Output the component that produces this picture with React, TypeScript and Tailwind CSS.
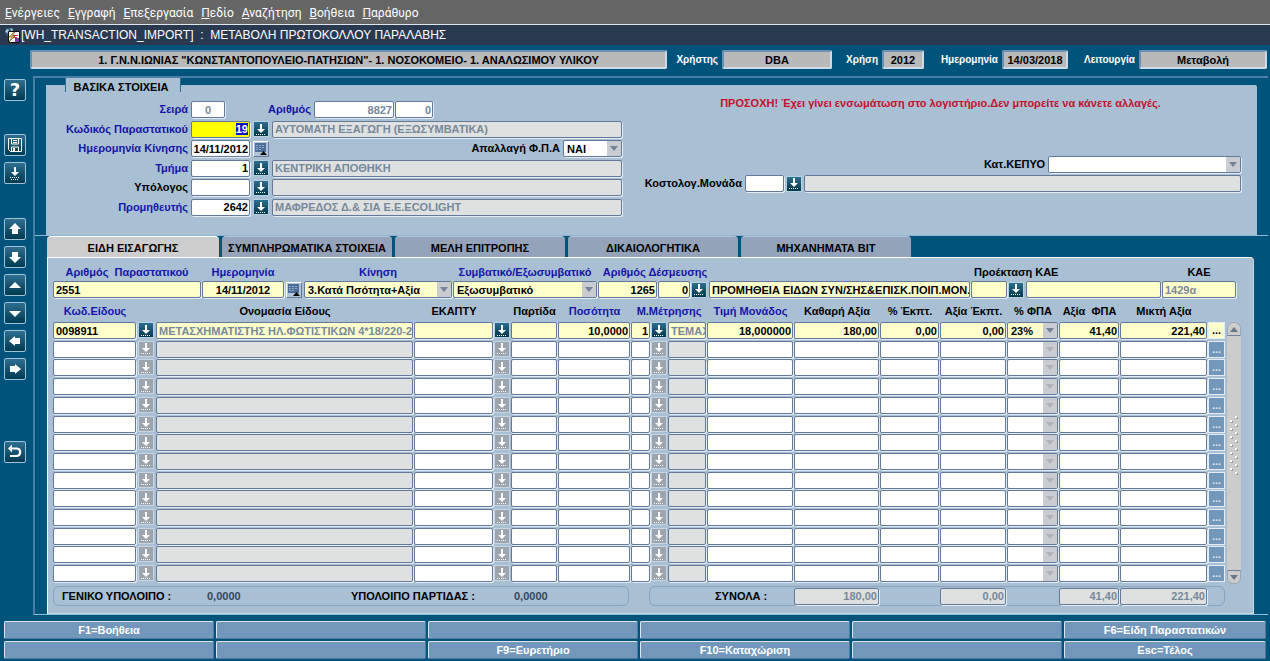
import { useEffect, useRef, type ReactNode } from 'react'
import { clsx } from 'clsx'

const menus = ['Ενέργειες', 'Εγγραφή', 'Επεξεργασία', 'Πεδίο', 'Αναζήτηση', 'Βοήθεια', 'Παράθυρο']

const tabs = ['ΕΙΔΗ ΕΙΣΑΓΩΓΗΣ', 'ΣΥΜΠΛΗΡΩΜΑΤΙΚΑ ΣΤΟΙΧΕΙΑ', 'ΜΕΛΗ ΕΠΙΤΡΟΠΗΣ', 'ΔΙΚΑΙΟΛΟΓΗΤΙΚΑ', 'ΜΗΧΑΝΗΜΑΤΑ ΒΙΤ']

const functionKeys = [
  'F1=Βοήθεια', '', '', '', '', 'F6=Είδη Παραστατικών',
  '', '', 'F9=Ευρετήριο', 'F10=Καταχώριση', '', 'Esc=Τέλος'
]

const emptyRows = Array.from({ length: 13 }, (_, i) => i + 2)

type Tone = 'white' | 'yellow' | 'gray' | 'active'

interface FieldProps {
  label?: string
  id?: string
  value?: string
  tone?: Tone
  muted?: boolean
  align?: 'left' | 'center' | 'right'
  className?: string
}

const tones: Record<Tone, string> = {
  white: 'bg-white',
  yellow: 'bg-[#ffffcc]',
  gray: 'bg-[#dee1e0]',
  active: 'bg-[#ffff00]'
}

const aligns = { left: 'pl-0.5 text-left', center: 'text-center', right: 'pr-px text-right' }

const fieldBox =
  'block h-[17px] min-w-0 rounded-xs border border-[#64789a] text-[11px] font-bold outline-none shadow-[1px_1px_0_#e4edf5]'

function Field({ label, id, value = '', tone = 'white', muted, align = 'left', className = 'w-full' }: FieldProps) {
  return (
    <input
      id={id}
      aria-label={label}
      defaultValue={value}
      readOnly={tone === 'gray'}
      className={clsx(fieldBox, tones[tone], aligns[align], muted ? 'text-[#76889b]' : 'text-black', className)}
    />
  )
}

interface ChoiceProps {
  label?: string
  id?: string
  value?: string
  tone?: Tone
  disabled?: boolean
  className?: string
}

function Choice({ label, id, value = '', tone = 'white', disabled, className = 'w-full' }: ChoiceProps) {
  return (
    <div className={clsx('relative', className)}>
      <select
        id={id}
        aria-label={label}
        disabled={disabled}
        className={clsx(fieldBox, tones[tone], 'w-full appearance-none pt-0.5 pl-[3px] text-black opacity-100')}
      >
        <option>{value}</option>
      </select>
      <span className="pointer-events-none absolute inset-y-px right-px flex w-[14px] items-center justify-center bg-[#c9ccd1]">
        <svg width="8" height="5" viewBox="0 0 8 5">
          <path d="M0 0h8L4 5z" fill={disabled ? '#b0b3b8' : '#75829a'} />
        </svg>
      </span>
    </div>
  )
}

function ListButton({ label, disabled }: { label: string; disabled?: boolean }) {
  return (
    <button
      aria-label={label}
      disabled={disabled}
      className={clsx(
        'flex size-4 shrink-0 items-center justify-center border',
        disabled
          ? 'border-[#c8d5e2] bg-[#9ca5ad]'
          : 'border-[#b5d0de] bg-linear-to-b from-[#2d6f8f] to-[#00384c]'
      )}
    >
      <svg width="12" height="13" viewBox="0 0 12 13" fill="#fff">
        <path d="M5 1h2v5h3L6 10 2 6h3z" />
        <path d="M1 11h1v1H1zM3 11h1v1H3zM5 11h1v1H5zM7 11h1v1H7zM9 11h1v1H9z" />
      </svg>
    </button>
  )
}

function CalendarButton({ label }: { label: string }) {
  return (
    <button
      aria-label={label}
      className="flex size-4 shrink-0 items-center justify-center border border-t-white border-r-[#64789a] border-b-[#64789a] border-l-white bg-[#b4c5d6]"
    >
      <svg width="14" height="14" viewBox="0 0 14 14">
        <path d="M1 1h11v9H1z" fill="#4c6f99" />
        <path d="M2 3.500h9M2 5.500h9M2 7.500h5" stroke="#8fadc9" strokeDasharray="2 1" />
        <path d="M6 13l3.500-4 3.500 4z" fill="#000" />
      </svg>
    </button>
  )
}

function ToolButton({ label, children }: { label: string; children: ReactNode }) {
  return (
    <button
      aria-label={label}
      className="flex size-[22px] items-center justify-center rounded-xs border border-[#9cc3d8] bg-linear-to-b from-[#2e6f90] to-[#003a50]"
    >
      <svg width="18" height="18" viewBox="0 0 18 18" fill="#fff">
        {children}
      </svg>
    </button>
  )
}

function Toolbar() {
  return (
    <aside className="flex w-[33px] shrink-0 flex-col gap-1.5 pt-[3px] pl-1">
      <button
        aria-label="Βοήθεια"
        className="size-[22px] rounded-xs border border-[#9cc3d8] bg-linear-to-b from-[#2e6f90] to-[#003a50] text-center font-['DejaVu_Sans',sans-serif] text-[18px] leading-[20px] font-bold text-white"
      >
        ?
      </button>
      <div className="mt-[27px] flex flex-col gap-1.5">
        <ToolButton label="Αποθήκευση">
          <path d="M2.500 2.500h13v13H4.500l-2-2z" fill="none" stroke="#fff" />
          <path d="M5.500 3v5h7V3M5.500 15v-4h7v4" fill="none" stroke="#fff" />
          <path d="M7 4h4v1H7zM7 6h4v1H7zM7 12h2v3H7z" />
        </ToolButton>
        <ToolButton label="Λίστα τιμών">
          <path d="M8 3h2v5h3l-4 4-4-4h3z" />
          <path d="M4 13h1v1H4zM6 13h1v1H6zM8 13h1v1H8zM10 13h1v1h-1zM12 13h1v1h-1zM5 15h1v1H5zM7 15h1v1H7zM9 15h1v1H9zM11 15h1v1h-1z" />
        </ToolButton>
      </div>
      <div className="mt-7 flex flex-col gap-1.5">
        <ToolButton label="Προηγούμενη ομάδα"><path d="M9 3l6 6h-3v5H6V9H3z" /></ToolButton>
        <ToolButton label="Επόμενη ομάδα"><path d="M9 15l6-6h-3V4H6v5H3z" /></ToolButton>
        <ToolButton label="Προηγούμενη εγγραφή"><path d="M9 6l6 6H3z" /></ToolButton>
        <ToolButton label="Επόμενη εγγραφή"><path d="M9 13l6-6H3z" /></ToolButton>
        <ToolButton label="Προηγούμενο πεδίο"><path d="M3 9l6-5v2h5v6H9v2z" /></ToolButton>
        <ToolButton label="Επόμενο πεδίο"><path d="M15 9L9 4v2H4v6h5v2z" /></ToolButton>
      </div>
      <div className="mt-[55px]">
        <ToolButton label="Επιστροφή">
          <path d="M5 5.500h6a3.800 3.800 0 0 1 0 7.500H4" fill="none" stroke="#fff" strokeWidth="2.200" />
          <path d="M2 5.500l4-4v8z" />
        </ToolButton>
      </div>
    </aside>
  )
}

function InfoLabel({ children }: { children: ReactNode }) {
  return <span className="pr-1 text-right text-[10px] text-white">{children}</span>
}

function InfoBox({ children }: { children: ReactNode }) {
  return (
    <span className="flex h-[19px] items-center justify-center rounded-xs border-2 border-t-[#6f8fb0] border-r-[#cdd9e4] border-b-[#cdd9e4] border-l-[#6f8fb0] bg-[#b9b9b9] pt-px whitespace-nowrap">
      {children}
    </span>
  )
}

function InfoBar() {
  return (
    <header className="grid grid-cols-[1fr_55px_110px_50px_42px_78px_66px_71px_128px] items-center pt-[5px] pr-[3px] pl-[30px]">
      <InfoBox>1. Γ.Ν.Ν.ΙΩΝΙΑΣ "ΚΩΝΣΤΑΝΤΟΠΟΥΛΕΙΟ-ΠΑΤΗΣΙΩΝ"- 1. ΝΟΣΟΚΟΜΕΙΟ- 1. ΑΝΑΛΩΣΙΜΟΥ ΥΛΙΚΟΥ</InfoBox>
      <InfoLabel>Χρήστης</InfoLabel>
      <InfoBox>DBA</InfoBox>
      <InfoLabel>Χρήση</InfoLabel>
      <InfoBox>2012</InfoBox>
      <InfoLabel>Ημερομηνία</InfoLabel>
      <InfoBox>14/03/2018</InfoBox>
      <InfoLabel>Λειτουργία</InfoLabel>
      <InfoBox>Μεταβολή</InfoBox>
    </header>
  )
}

function FormLabel({ htmlFor, dark, children }: { htmlFor: string; dark?: boolean; children: ReactNode }) {
  return (
    <label
      htmlFor={htmlFor}
      className={clsx('w-[142px] shrink-0 text-right whitespace-nowrap', dark ? 'text-black' : 'text-[#1414a8]')}
    >
      {children}
    </label>
  )
}

function BasicDetails() {
  const codeRef = useRef<HTMLInputElement>(null)

  useEffect(() => {
    codeRef.current?.focus()
    codeRef.current?.select()
  }, [])

  return (
    <section className="mx-[11px] flow-root h-[150px] rounded-tr-xs bg-[#a9bfd3]">
      <h2 className="-mt-[7px] ml-[19px] flex h-[14px] w-[116px] items-center justify-center border-x border-[#2f6b8c] bg-[#a9bfd3] pt-1 pr-1">
        ΒΑΣΙΚΑ ΣΤΟΙΧΕΙΑ
      </h2>
      <div className="flex gap-[18px] pt-[9px] pr-4">
        <div className="flex h-[115px] w-[576px] shrink-0 flex-col justify-between">
          <div className="flex items-center gap-[3px]">
            <FormLabel htmlFor="series">Σειρά</FormLabel>
            <Field id="series" value="0" align="center" muted className="w-[34px]" />
            <label htmlFor="number" className="w-[83px] text-right text-[#1414a8]">Αριθμός</label>
            <div className="flex gap-px">
              <Field id="number" value="8827" align="right" muted className="w-[80px]" />
              <Field label="Αριθμός (συνέχεια)" value="0" align="right" muted className="w-[38px]" />
            </div>
          </div>
          <div className="flex items-center gap-[3px]">
            <FormLabel htmlFor="code">Κωδικός Παραστατικού</FormLabel>
            <input
              id="code"
              ref={codeRef}
              defaultValue="19"
              className={clsx(fieldBox, tones.active, 'w-[59px] pr-px text-right text-black selection:bg-[#0a12c8] selection:text-white')}
            />
            <ListButton label="Λίστα παραστατικών" />
            <Field label="Περιγραφή παραστατικού" value="ΑΥΤΟΜΑΤΗ ΕΞΑΓΩΓΗ (ΕΞΩΣΥΜΒΑΤΙΚΑ)" tone="gray" muted className="flex-1" />
          </div>
          <div className="flex items-center gap-[3px]">
            <FormLabel htmlFor="moved">Ημερομηνία Κίνησης</FormLabel>
            <Field id="moved" value="14/11/2012" align="right" className="w-[59px]" />
            <CalendarButton label="Ημερολόγιο κίνησης" />
            <label htmlFor="exempt" className="flex-1 text-right">Απαλλαγή Φ.Π.Α</label>
            <Choice id="exempt" value="ΝΑΙ" className="w-[59px]" />
          </div>
          <div className="flex items-center gap-[3px]">
            <FormLabel htmlFor="department">Τμήμα</FormLabel>
            <Field id="department" value="1" align="right" className="w-[59px]" />
            <ListButton label="Λίστα τμημάτων" />
            <Field label="Περιγραφή τμήματος" value="ΚΕΝΤΡΙΚΗ ΑΠΟΘΗΚΗ" tone="gray" muted className="flex-1" />
          </div>
          <div className="flex items-center gap-[3px]">
            <FormLabel htmlFor="officer" dark>Υπόλογος</FormLabel>
            <Field id="officer" className="w-[59px]" />
            <ListButton label="Λίστα υπολόγων" />
            <Field label="Όνομα υπολόγου" tone="gray" className="flex-1" />
          </div>
          <div className="flex items-center gap-[3px]">
            <FormLabel htmlFor="supplier">Προμηθευτής</FormLabel>
            <Field id="supplier" value="2642" align="right" className="w-[59px]" />
            <ListButton label="Λίστα προμηθευτών" />
            <Field label="Όνομα προμηθευτή" value="ΜΑΦΡΕΔΟΣ Δ.& ΣΙΑ Ε.Ε.ECOLIGHT" tone="gray" muted className="flex-1" />
          </div>
        </div>
        <div className="flex min-w-0 flex-1 flex-col">
          <p className="-mt-1 h-[59px] text-center whitespace-nowrap text-[#c4102c]">
            ΠΡΟΣΟΧΗ! Έχει γίνει ενσωμάτωση στο λογιστήριο.Δεν μπορείτε να κάνετε αλλαγές.
          </p>
          <div className="flex items-center justify-end gap-[3px]">
            <label htmlFor="kepyo">Κατ.ΚΕΠΥΟ</label>
            <Choice id="kepyo" className="w-[193px]" />
          </div>
          <div className="flex items-center gap-0.5 pt-0.5">
            <label htmlFor="costUnit" className="w-[103px] pr-px text-right whitespace-nowrap">Κοστολογ.Μονάδα</label>
            <Field id="costUnit" className="w-[39px]" />
            <ListButton label="Λίστα κοστολογικών μονάδων" />
            <Field label="Περιγραφή κοστολογικής μονάδας" tone="gray" className="flex-1" />
          </div>
        </div>
      </div>
    </section>
  )
}

function MovementHeader() {
  return (
    <div className="mr-[17px] grid grid-cols-[148px_82px_18px_148px_144px_59px_32px_17px_1fr_36px_17px_135px_74px] items-center gap-x-px text-center text-[#1414a8]">
      <label htmlFor="docNo" className="h-[15px] whitespace-pre">{'Αριθμός  Παραστατικού'}</label>
      <label htmlFor="docDate" className="h-[15px]">Ημερομηνία</label>
      <span />
      <label htmlFor="movement" className="h-[15px]">Κίνηση</label>
      <label htmlFor="contract" className="h-[15px]">Συμβατικό/Εξωσυμβατικό</label>
      <label htmlFor="binding" className="col-span-3 h-[15px] pl-1 whitespace-nowrap">Αριθμός Δέσμευσης</label>
      <span />
      <label htmlFor="kaeExt" className="col-span-3 h-[15px] pl-[3px] text-left text-black">Προέκταση ΚΑΕ</label>
      <label htmlFor="kae" className="h-[15px] text-black">ΚΑΕ</label>

      <Field id="docNo" value="2551" tone="yellow" />
      <Field id="docDate" value="14/11/2012" tone="yellow" align="center" />
      <span className="flex justify-center"><CalendarButton label="Ημερολόγιο παραστατικού" /></span>
      <Choice id="movement" value="3.Κατά Πσότητα+Αξία" tone="yellow" />
      <Choice id="contract" value="Εξωσυμβατικό" tone="yellow" />
      <Field id="binding" value="1265" tone="yellow" align="right" />
      <Field label="Αύξων δέσμευσης" value="0" tone="yellow" align="right" />
      <ListButton label="Λίστα δεσμεύσεων" />
      <Field label="Περιγραφή δέσμευσης" value="ΠΡΟΜΗΘΕΙΑ ΕΙΔΩΝ ΣΥΝ/ΣΗΣ&ΕΠΙΣΚ.ΠΟΙΠ.ΜΟΝ.Ε" tone="yellow" />
      <Field id="kaeExt" tone="yellow" />
      <ListButton label="Λίστα ΚΑΕ" />
      <Field label="Περιγραφή προέκτασης ΚΑΕ" tone="yellow" />
      <Field id="kae" value="1429α" tone="yellow" muted />
    </div>
  )
}

function ItemRow({ row, filled }: { row: number; filled?: boolean }) {
  const tone: Tone = filled ? 'yellow' : 'white'
  const lockedTone: Tone = filled ? 'yellow' : 'gray'
  const v = (text: string) => (filled ? text : '')

  return (
    <tr className="align-top">
      <td className="pr-px"><Field label={`Κωδικός είδους ${row}`} value={v('0098911')} tone={tone} /></td>
      <td className="pl-px"><ListButton label={`Λίστα ειδών ${row}`} disabled={!filled} /></td>
      <td className="pr-px"><Field label={`Ονομασία είδους ${row}`} value={v('ΜΕΤΑΣΧΗΜΑΤΙΣΤΗΣ ΗΛ.ΦΩΤΙΣΤΙΚΩΝ 4*18/220-240')} tone={lockedTone} muted /></td>
      <td className="pr-px"><Field label={`ΕΚΑΠΤΥ ${row}`} tone={tone} /></td>
      <td><ListButton label={`Λίστα παρτίδων ${row}`} disabled={!filled} /></td>
      <td className="pr-px"><Field label={`Παρτίδα ${row}`} tone={tone} /></td>
      <td className="pr-px"><Field label={`Ποσότητα ${row}`} value={v('10,0000')} tone={tone} align="right" /></td>
      <td className="pr-px"><Field label={`Μονάδα μέτρησης ${row}`} value={v('1')} tone={tone} align="right" /></td>
      <td><ListButton label={`Λίστα μονάδων ${row}`} disabled={!filled} /></td>
      <td className="pr-px"><Field label={`Περιγραφή μονάδας ${row}`} value={v('ΤΕΜΑΧΙΑ')} tone={lockedTone} muted /></td>
      <td className="pr-px"><Field label={`Τιμή μονάδος ${row}`} value={v('18,000000')} tone={tone} align="right" /></td>
      <td className="pr-px"><Field label={`Καθαρή αξία ${row}`} value={v('180,00')} tone={tone} align="right" /></td>
      <td className="pr-px"><Field label={`% Έκπτωση ${row}`} value={v('0,00')} tone={tone} align="right" /></td>
      <td className="pr-px"><Field label={`Αξία έκπτωσης ${row}`} value={v('0,00')} tone={tone} align="right" /></td>
      <td className="pr-px"><Choice label={`% ΦΠΑ ${row}`} value={v('23%')} tone={tone} disabled={!filled} /></td>
      <td className="pr-px"><Field label={`Αξία ΦΠΑ ${row}`} value={v('41,40')} tone={tone} align="right" /></td>
      <td className="pr-px"><Field label={`Μικτή αξία ${row}`} value={v('221,40')} tone={tone} align="right" /></td>
      <td>
        <button
          aria-label={`Λεπτομέρειες ${row}`}
          className={clsx(
            'block h-[17px] w-[17px] border border-[#e4edf5] text-center leading-[15px]',
            filled ? 'bg-[#ffffcc] text-black' : 'bg-[#7297bb] text-[#dbe6f0]'
          )}
        >
          ...
        </button>
      </td>
    </tr>
  )
}

function ItemsTable() {
  return (
    <table className="h-[284px] min-w-0 flex-1 table-fixed border-collapse">
      <colgroup>
        <col className="w-[84px]" />
        <col className="w-[19px]" />
        <col />
        <col className="w-[80px]" />
        <col className="w-[17px]" />
        <col className="w-[47px]" />
        <col className="w-[73px]" />
        <col className="w-[20px]" />
        <col className="w-[17px]" />
        <col className="w-[39px]" />
        <col className="w-[87px]" />
        <col className="w-[86px]" />
        <col className="w-[60px]" />
        <col className="w-[67px]" />
        <col className="w-[52px]" />
        <col className="w-[61px]" />
        <col className="w-[88px]" />
        <col className="w-[17px]" />
      </colgroup>
      <thead>
        <tr className="h-[22px] whitespace-pre">
          <th className="text-[#1414a8]">Κωδ.Είδους</th>
          <th />
          <th>Ονομασία Είδους</th>
          <th>ΕΚΑΠΤΥ</th>
          <th />
          <th>Παρτίδα</th>
          <th className="text-[#1414a8]">Ποσότητα</th>
          <th colSpan={3} className="text-[#1414a8]">Μ.Μέτρησης</th>
          <th className="text-[#1414a8]">Τιμή Μονάδος</th>
          <th>Καθαρή Αξία</th>
          <th>% Έκπτ.</th>
          <th>Αξία Έκπτ.</th>
          <th>% ΦΠΑ</th>
          <th>{'Αξία  ΦΠΑ'}</th>
          <th>Μικτή Αξία</th>
          <th />
        </tr>
      </thead>
      <tbody>
        <ItemRow row={1} filled />
        {emptyRows.map((row) => (
          <ItemRow key={row} row={row} />
        ))}
      </tbody>
    </table>
  )
}

function ScrollBar() {
  return (
    <div className="mt-[22px] flex w-[14px] flex-col rounded-md bg-[#cccccc]">
      <button aria-label="Πάνω" className="flex h-[14px] items-center justify-center rounded-t-md border border-[#9aa8b8] border-b-[#75829a]">
        <svg width="8" height="5" viewBox="0 0 8 5"><path d="M0 5h8L4 0z" fill="#6d7686" /></svg>
      </button>
      <div className="flex flex-1 justify-center pt-20">
        <svg width="8" height="60" viewBox="0 0 8 60">
          {Array.from({ length: 15 }, (_, i) => (
            <g key={i}>
              <path d={`M${i % 2 ? 1 : 6} ${1 + i * 4}h2v2h-2z`} fill="#999" />
              <path d={`M${i % 2 ? 0 : 5} ${i * 4}h2v2h-2z`} fill="#fff" />
            </g>
          ))}
        </svg>
      </div>
      <button aria-label="Κάτω" className="flex h-[14px] items-center justify-center rounded-b-md border border-[#9aa8b8] border-t-[#75829a]">
        <svg width="8" height="5" viewBox="0 0 8 5"><path d="M0 0h8L4 5z" fill="#6d7686" /></svg>
      </button>
    </div>
  )
}

function Totals() {
  return (
    <div className="mt-0.5 mr-7 flex h-[20px] gap-5">
      <div className="flex flex-1 items-center rounded-md border border-[#8aa3bf] pl-2">
        <span className="w-[145px]">ΓΕΝΙΚΟ ΥΠΟΛΟΙΠΟ :</span>
        <output className="w-[144px] text-[#33475f]">0,0000</output>
        <span className="w-[163px]">ΥΠΟΛΟΙΠΟ ΠΑΡΤΙΔΑΣ :</span>
        <output className="text-[#33475f]">0,0000</output>
      </div>
      <div className="grid w-[576px] grid-cols-[144px_86px_60px_67px_52px_61px_88px] items-center rounded-md border border-[#8aa3bf]">
        <span className="pl-[65px]">ΣΥΝΟΛΑ :</span>
        <Field label="Σύνολο καθαρής αξίας" value="180,00" tone="gray" muted align="right" className="w-[85px]" />
        <span />
        <Field label="Σύνολο εκπτώσεων" value="0,00" tone="gray" muted align="right" className="w-[66px]" />
        <span />
        <Field label="Σύνολο ΦΠΑ" value="41,40" tone="gray" muted align="right" className="w-[60px]" />
        <Field label="Σύνολο μικτής αξίας" value="221,40" tone="gray" muted align="right" className="w-[87px]" />
      </div>
    </div>
  )
}

function Tabs() {
  return (
    <div role="tablist" className="flex gap-[3px] pl-3">
      {tabs.map((tab, i) => (
        <button
          key={tab}
          role="tab"
          aria-selected={i === 0}
          className={clsx(
            'h-[21px] rounded-t-sm border-t pt-0.5 text-center whitespace-nowrap',
            i === 0 ? 'w-[172px] border-white bg-[#cdcdcd]' : 'w-[170px] border-[#b4c3d4] bg-[#94a3b9]'
          )}
        >
          {tab}
        </button>
      ))}
    </div>
  )
}

function AppIcon() {
  return (
    <svg width="16" height="16" viewBox="0 0 16 16">
      <circle cx="5" cy="5" r="4" fill="#2f5f86" />
      <path d="M1 5l2-3 2 1-1 3zM6 1l3 1-1 3z" fill="#a8cdd0" />
      <path d="M4.500 4.500h11v11h-11z" fill="#fff" stroke="#111" />
      <path d="M11 11h4v4h-4z" fill="#7a3fa8" />
      <path d="M9 8h5v1H9zM9 10h4v1H9z" fill="#d02060" />
      <path d="M10 5L5 10h3l-3 5 6-6H8l3-4z" fill="#ffd93b" stroke="#222" strokeWidth="0.500" />
    </svg>
  )
}

export default function App() {
  return (
    <div className="flex min-h-screen flex-col bg-[#00547c] font-['Liberation_Sans',Arial,sans-serif] text-[11px] leading-[13px] font-bold text-black">
      <nav className="flex h-[24px] items-center gap-2 bg-[#666666] pt-0.5 pl-[5px] font-[Roboto,'Noto_Sans',sans-serif] text-[12px] font-normal text-white">
        {menus.map((menu) => (
          <button key={menu} className="first-letter:underline">{menu}</button>
        ))}
      </nav>
      <div className="flex h-[21px] items-center gap-px border-t border-[#dfe6ec] bg-[#29394f] pl-1 text-[12px] font-normal text-white">
        <AppIcon />
        <h1 className="whitespace-pre">{'[WH_TRANSACTION_IMPORT]  :  ΜΕΤΑΒΟΛΗ ΠΡΩΤΟΚΟΛΛΟΥ ΠΑΡΑΛΑΒΗΣ'}</h1>
      </div>
      <InfoBar />
      <div className="mt-[7px] mr-0.5 flex">
        <Toolbar />
        <main className="min-w-0 flex-1 border-t-2 border-b border-l-2 border-t-[#4a7fa8] border-b-[#8fbfdd] border-l-[#4a7fa8] pt-[7px]">
          <BasicDetails />
          <div className="border-t border-[#8fb6d2]" />
          <Tabs />
          <div className="mr-[14px] ml-3 rounded-tr-sm border border-t-white border-r-[#c9d6e3] border-b-[#c9d6e3] border-l-white bg-[#a9bfd3] pt-2 pb-[7px] pl-[5px]">
            <MovementHeader />
            <div className="mt-0.5 mr-3 flex gap-0.5">
              <ItemsTable />
              <ScrollBar />
            </div>
            <Totals />
          </div>
        </main>
      </div>
      <footer className="mx-1 mt-1.5 grid grid-cols-[repeat(5,210fr)_202fr] gap-0.5 pb-0.5">
        {functionKeys.map((key, i) => (
          <button
            key={i}
            aria-label={key || `Κενό πλήκτρο ${i + 1}`}
            className="h-[18px] rounded-xs border border-t-[#dbe7f1] border-r-[#4f7da3] border-b-[#4f7da3] border-l-[#dbe7f1] bg-[#7297bb] text-center text-white"
          >
            {key}
          </button>
        ))}
      </footer>
    </div>
  )
}
